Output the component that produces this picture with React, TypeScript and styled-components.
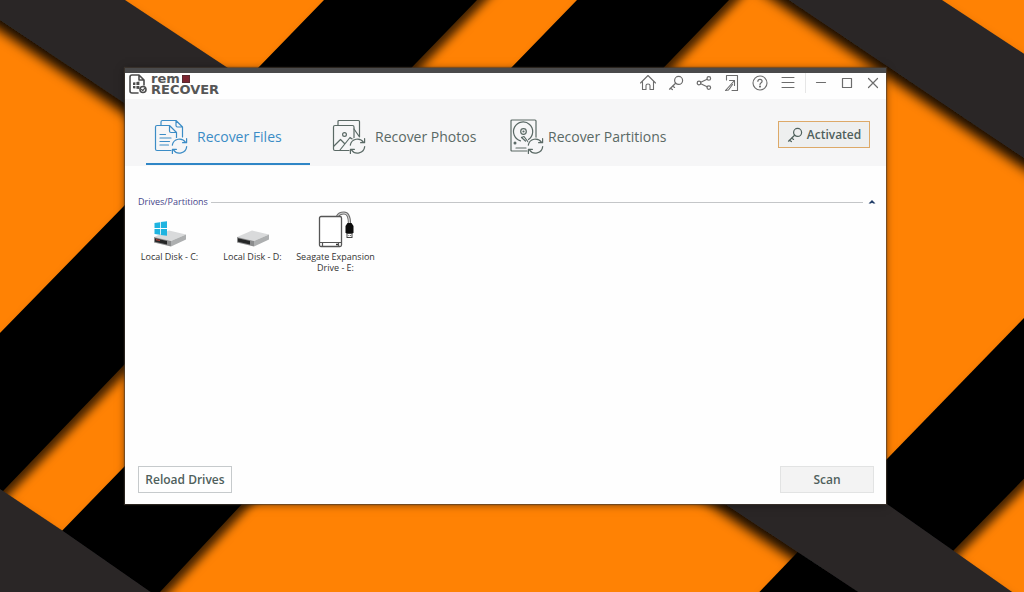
import React from "react";
import styled, { createGlobalStyle } from "styled-components";

const GlobalStyle = createGlobalStyle`
  *, *::before, *::after { box-sizing: border-box; }
  body {
    margin: 0;
    background: #ff8204;
    font-family: "Open Sans", "Noto Sans", sans-serif;
    color: #4f605c;
  }
  button { font: inherit; color: inherit; cursor: pointer; }
`;

const Desktop = styled.div`
  position: relative;
  display: flex;
  min-height: 100vh;
  padding: 68px 138px 88px 125px;
  overflow: hidden;
`;

const Wallpaper = styled.svg`
  position: absolute;
  inset: 0;
  width: 100%;
  height: 100%;
`;

const AppWindow = styled.main`
  position: relative;
  flex: 1;
  display: flex;
  flex-direction: column;
  min-width: 0;
  border-top: 5px solid #4a4a4b;
  background: #fefefe;
  box-shadow: 0 0 1px 1px rgba(70, 60, 50, 0.6), 0 1px 8px rgba(0, 0, 0, 0.5);
`;

const TitleBar = styled.header`
  display: flex;
  align-items: flex-start;
  justify-content: space-between;
  height: 26px;
`;

const Brand = styled.div`
  display: flex;
  gap: 4px;
  padding: 1px 0 0 4px;
`;

const BrandName = styled.div`
  display: grid;
  font-family: "DejaVu Sans", sans-serif;
  font-size: 13px;
  font-weight: 700;
  color: #565656;
`;

const BrandTop = styled.span`
  display: flex;
  align-items: center;
  gap: 2px;
  height: 10px;
  line-height: 6px;
`;

const BrandSquare = styled.i`
  width: 8px;
  height: 8px;
  background: #7c2430;
  border: 1px solid #5a2a30;
`;

const BrandBottom = styled.span`
  line-height: 12px;
`;

const Toolbar = styled.nav`
  display: flex;
  align-items: center;
  height: 20px;
`;

const ToolButton = styled.button<{ $width: number }>`
  display: grid;
  place-items: center;
  width: ${(p) => p.$width}px;
  height: 20px;
  padding: 0;
  border: 0;
  background: none;
  color: #6c6c6c;
`;

const Separator = styled.span`
  width: 1px;
  height: 20px;
  margin: 0 2px 0 3px;
  background: #e6e6e6;
`;

const TabBar = styled.div`
  display: flex;
  align-items: flex-start;
  gap: 14px;
  height: 67px;
  padding: 0 16px 0 21px;
  background: #f6f6f7;
`;

const Tab = styled.button<{ $active?: boolean; $gap?: number }>`
  display: flex;
  align-items: center;
  gap: ${(p) => p.$gap ?? 9}px;
  width: 164px;
  height: 66px;
  padding: 12px 0 0 8px;
  border: 0;
  border-bottom: 2px solid ${(p) => (p.$active ? "#2f86c6" : "transparent")};
  background: none;
  color: ${(p) => (p.$active ? "#3b8cc6" : "#5a6965")};
  font-size: 14px;
  line-height: 20px;
  white-space: nowrap;

  svg { flex: none; }
`;

const Activated = styled.button`
  display: flex;
  align-items: center;
  justify-content: center;
  gap: 4px;
  width: 92px;
  height: 27px;
  margin: 22px 0 0 auto;
  padding: 0;
  border: 1px solid #dda968;
  background: #eeefef;
  font-size: 12px;
  font-weight: 600;
`;

const Content = styled.section`
  flex: 1;
  padding: 30px 8px 0 3px;
`;

const GroupHeader = styled.div`
  display: flex;
  align-items: center;
  gap: 3px;
  padding-left: 10px;
`;

const GroupTitle = styled.h2`
  margin: 0;
  color: #45458a;
  font-size: 9px;
  font-weight: 400;
  line-height: 12px;
`;

const GroupLine = styled.span`
  flex: 1;
  height: 1px;
  background: #c4c6c8;
`;

const Collapse = styled.button`
  display: grid;
  place-items: center;
  width: 12px;
  height: 12px;
  padding: 0;
  border: 0;
  background: none;
`;

const DriveList = styled.ul`
  display: flex;
  margin: 3px 0 0;
  padding: 0;
  list-style: none;
`;

const Drive = styled.button`
  display: flex;
  flex-direction: column;
  align-items: center;
  gap: 2px;
  width: 83px;
  padding: 0;
  border: 0;
  background: none;
  color: #333;
  font-size: 9px;
  line-height: 11px;
`;

const Footer = styled.footer`
  display: flex;
  justify-content: space-between;
  padding: 0 12px 11px 13px;
`;

const FooterButton = styled.button<{ $filled?: boolean }>`
  width: 94px;
  height: 27px;
  padding: 0;
  border: 1px solid ${(p) => (p.$filled ? "#e2e3e3" : "#c6cacc")};
  background: ${(p) => (p.$filled ? "#f3f3f3" : "#fefefe")};
  font-size: 12px;
  font-weight: 600;
`;

const line = { fill: "none", stroke: "currentColor", strokeLinecap: "round", strokeLinejoin: "round" } as const;

function Stripes() {
  return (
    <Wallpaper viewBox="0 0 1024 592" preserveAspectRatio="none" aria-hidden="true">
      <defs>
        <filter id="blackShadow" filterUnits="userSpaceOnUse" x="-60" y="-60" width="1150" height="720">
          <feDropShadow dx="5" dy="5" stdDeviation="5" floodOpacity="0.75" />
        </filter>
        <filter id="greyShadow" filterUnits="userSpaceOnUse" x="-60" y="-120" width="1150" height="780">
          <feDropShadow dx="-4" dy="8" stdDeviation="6" floodOpacity="0.9" />
        </filter>
      </defs>
      <rect width="1024" height="592" fill="#ff8204" />
      <g fill="#000" filter="url(#blackShadow)">
        <path d="M363 -40L324 0L123 207L-40 374V536L5 489L123 366L477 0L516 -40Z" />
        <path d="M616 -40L577 0L123 468L-10 605V640H115L160 592L242 504L729 0L768 -40Z" />
        <path d="M1064 277L1024 318L887 459L721 632H873L953 551L1064 438Z" />
      </g>
      <g fill="#2a2728" filter="url(#greyShadow)">
        <path d="M-40 -107L125 0L887 504L1069 632H919L725 504L0 20L-40 -6Z" />
        <path d="M882 -40L942 0L1064 80V185L789 0L729 -40Z" />
        <path d="M-40 462L0 489L63 531L208 632H-40Z" />
      </g>
    </Wallpaper>
  );
}

function LogoMark() {
  return (
    <svg width="18" height="20" viewBox="0 0 18 20" {...line} strokeWidth="1.6" stroke="#4c4c4c" aria-hidden="true">
      <path d="M9 19H3Q1 19 1 17V3Q1 1 3 1H10L15 6V11M10 1V6H15" />
      <path d="M4 8.6L6.4 8.2V11H4ZM7.4 8L10.4 7.6V11H7.4ZM4 12H6.4V14.6L4 14.2ZM7.4 12H10.4V15L7.4 14.7Z" fill="#4c4c4c" stroke="none" />
      <circle cx="14" cy="15.5" r="3" />
      <path d="M12.6 15.5L13.8 16.6L15.6 14.4" strokeWidth="1.2" />
    </svg>
  );
}

function HomeIcon() {
  return (
    <svg width="18" height="18" viewBox="0 0 18 18" {...line} strokeWidth="1.1">
      <path d="M1.5 9L9 1.5L16.5 9M3.5 7.8V15.5H7V11.5Q7 10 9 10T11 11.5V15.5H14.5V7.8" />
    </svg>
  );
}

function KeyIcon() {
  return (
    <svg width="16" height="16" viewBox="0 0 16 16" {...line} strokeWidth="1.2">
      <circle cx="10.6" cy="5.4" r="4" />
      <path d="M7.6 8.2L1.5 14.2M2.4 13.2L4.4 14.6M4.6 11L6.6 12.4" />
    </svg>
  );
}

function ShareIcon() {
  return (
    <svg width="16" height="16" viewBox="0 0 16 16" {...line} strokeWidth="1.2">
      <circle cx="3" cy="8" r="1.8" />
      <circle cx="12.8" cy="3.4" r="1.8" />
      <circle cx="12.8" cy="12.6" r="1.8" />
      <path d="M4.8 7.2L11.1 4.2M4.8 8.8L11.1 11.8" />
    </svg>
  );
}

function ExportIcon() {
  return (
    <svg width="16" height="18" viewBox="0 0 16 18" {...line} strokeWidth="1.1">
      <path d="M2.5 6V1.5H13.5V16.5H8" />
      <path d="M5.5 6.5H10.5V11.5M10.5 6.5L1.5 16.5L4.5 16L8.5 10.5" />
    </svg>
  );
}

function HelpIcon() {
  return (
    <svg width="16" height="16" viewBox="0 0 16 16" {...line} strokeWidth="1.1">
      <circle cx="8" cy="8" r="7" />
      <path d="M5.9 6.3Q5.9 4.4 8 4.4T10.1 6.3Q10.1 7.3 8.9 8Q8 8.6 8 9.6" strokeWidth="1.2" />
      <circle cx="8" cy="11.6" r="0.5" fill="currentColor" />
    </svg>
  );
}

function MenuIcon() {
  return (
    <svg width="14" height="14" viewBox="0 0 14 14" {...line} strokeWidth="1">
      <path d="M1 1.5H13M1 6.5H13M1 11.5H13" />
    </svg>
  );
}

function WindowIcon({ kind }: { kind: "min" | "max" | "close" }) {
  const d = {
    min: "M1.5 5.5H10.5",
    max: "M1.5 1.5H10.5V10.5H1.5Z",
    close: "M1.5 1.5L10.5 10.5M10.5 1.5L1.5 10.5",
  }[kind];
  return (
    <svg width="12" height="12" viewBox="0 0 12 12" {...line} strokeWidth="1.2">
      <path d={d} />
    </svg>
  );
}

function RefreshMark() {
  return (
    <>
      <circle cx="25.5" cy="27" r="8.5" fill="#f6f6f7" stroke="none" />
      <path d="M18.3 26.2A7.3 7.3 0 0 1 31.6 23.4M32.6 19.6V23.7H28.6M32.7 27.6A7.3 7.3 0 0 1 19.4 30.8M18.4 34.4V30.4H22.4" />
    </>
  );
}

function FilesIcon() {
  return (
    <svg width="34" height="36" viewBox="0 0 34 36" {...line} strokeWidth="1.2">
      <path d="M17 31.5H3Q1.5 31.5 1.5 30V8Q1.5 6.5 3 6.5H15.5L22.5 13.5V19M15.5 6.5V12Q15.5 13.5 17 13.5H22.5" />
      <path d="M7 6V3Q7 1.5 8.5 1.5H22L28.5 8V18M22 1.5V6.5Q22 8 23.5 8H28.5" />
      <path d="M6 15.5H11.5M6 19H17M6 22.5H15.5M6 26H14.5" />
      <RefreshMark />
    </svg>
  );
}

function PhotosIcon() {
  return (
    <svg width="34" height="36" viewBox="0 0 34 36" {...line} strokeWidth="1.2">
      <path d="M17 31.5H3Q1.5 31.5 1.5 30V8Q1.5 6.5 3 6.5H20.5Q22 6.5 22 8V19" />
      <path d="M6 6V2.5Q6 1.5 7 1.5H26.5Q27.5 1.5 27.5 2.5V18L22 10" />
      <circle cx="12.5" cy="15.5" r="1.9" />
      <path d="M2 27L8.5 20.5L12.5 24.5M8 31L18 18.5L21.5 21" />
      <RefreshMark />
    </svg>
  );
}

function PartitionsIcon() {
  return (
    <svg width="34" height="36" viewBox="0 0 34 36" {...line} strokeWidth="1.2">
      <path d="M17 32H2Q1 32 1 31V2Q1 1 2 1H25Q26 1 26 2V19" />
      <path d="M10.5 21.8A9.6 9.6 0 1 1 18.5 20.5" />
      <circle cx="13.5" cy="12.5" r="2.8" />
      <circle cx="13.5" cy="12.5" r="0.5" />
      <path d="M11.5 18.5L14 17.5L18.5 23.5M11.5 18.5L15.5 22M6 29H16" />
      <circle cx="5" cy="24" r="0.9" fill="currentColor" />
      <RefreshMark />
    </svg>
  );
}

function DiskIcon({ system }: { system?: boolean }) {
  return (
    <svg width="36" height="38" viewBox="0 0 36 38" aria-hidden="true">
      <path d="M2 26L17 19.5L34 23.5L19 30Z" fill="#d9dadb" />
      <path d="M19 30L34 23.5V28.5L19 35.5Z" fill="#adafb0" />
      <path d="M2 26L19 30V35.5L2 31.5Z" fill="#8b8c8d" />
      <path d="M3 27.3L15 30V33.5L3 30.8Z" fill="#252627" />
      {system && (
        <>
          <path d="M4 28.6L8 29.5" stroke="#b34138" strokeWidth="1.2" />
          <path d="M2.5 12L8 11.2V17H2.5ZM8.8 11.1L15 10.2V17H8.8ZM2.5 18H8V23.8L2.5 23ZM8.8 18H15V24.8L8.8 23.9Z" fill="#1fb4e0" />
        </>
      )}
    </svg>
  );
}

function UsbDriveIcon() {
  return (
    <svg width="36" height="38" viewBox="0 0 36 38" fill="none" aria-hidden="true">
      <path d="M19.5 5.5Q21 2 26 2Q31.5 2 31.5 13" stroke="#6e6e6e" strokeWidth="3.2" />
      <path d="M19.5 5.5Q21 2 26 2Q31.5 2 31.5 13" stroke="#d5d5d5" strokeWidth="1.2" />
      <rect x="1.5" y="5.5" width="22" height="30" rx="1.5" fill="#fff" stroke="#555" strokeWidth="1.3" />
      <path d="M1.5 31.5H23.5M4.5 31.5V35M20.5 31.5V35" stroke="#555" strokeWidth="1.2" />
      <path d="M18 33.5H20" stroke="#333" strokeWidth="1.5" />
      <path d="M29.5 12H33.5L35.5 15V21.5L34.5 22.5H28.5L27.5 21.5V15Z" fill="#0b0b0b" />
      <rect x="29" y="22.5" width="5" height="4" fill="#fff" stroke="#444" />
      <path d="M30.5 24.5H31.2M32.2 24.5H32.9" stroke="#333" />
    </svg>
  );
}

const tools = [
  { label: "Home", icon: <HomeIcon /> },
  { label: "License key", icon: <KeyIcon /> },
  { label: "Share", icon: <ShareIcon /> },
  { label: "Export", icon: <ExportIcon /> },
  { label: "Help", icon: <HelpIcon /> },
  { label: "Menu", icon: <MenuIcon /> },
];

const drives = [
  { label: "Local Disk - C:", icon: <DiskIcon system /> },
  { label: "Local Disk - D:", icon: <DiskIcon /> },
  { label: "Seagate Expansion Drive - E:", icon: <UsbDriveIcon /> },
];

export default function App() {
  return (
    <>
      <GlobalStyle />
      <Desktop>
        <Stripes />
        <AppWindow>
          <TitleBar>
            <Brand>
              <LogoMark />
              <BrandName>
                <BrandTop>rem<BrandSquare /></BrandTop>
                <BrandBottom>RECOVER</BrandBottom>
              </BrandName>
            </Brand>
            <Toolbar>
              {tools.map((t) => (
                <ToolButton key={t.label} $width={28} aria-label={t.label}>{t.icon}</ToolButton>
              ))}
              <Separator />
              <ToolButton $width={26} aria-label="Minimize"><WindowIcon kind="min" /></ToolButton>
              <ToolButton $width={26} aria-label="Maximize"><WindowIcon kind="max" /></ToolButton>
              <ToolButton $width={26} aria-label="Close"><WindowIcon kind="close" /></ToolButton>
            </Toolbar>
          </TitleBar>
          <TabBar>
            <Tab $active><FilesIcon />Recover Files</Tab>
            <Tab><PhotosIcon />Recover Photos</Tab>
            <Tab $gap={4}><PartitionsIcon />Recover Partitions</Tab>
            <Activated><KeyIcon />Activated</Activated>
          </TabBar>
          <Content>
            <GroupHeader>
              <GroupTitle>Drives/Partitions</GroupTitle>
              <GroupLine />
              <Collapse aria-label="Collapse group">
                <svg width="8" height="6" viewBox="0 0 8 6" fill="#1e3a66"><path d="M4 1L7.5 4.5H5.3L4 3.7L2.7 4.5H0.5Z" /></svg>
              </Collapse>
            </GroupHeader>
            <DriveList>
              {drives.map((d) => (
                <li key={d.label}><Drive>{d.icon}<span>{d.label}</span></Drive></li>
              ))}
            </DriveList>
          </Content>
          <Footer>
            <FooterButton>Reload Drives</FooterButton>
            <FooterButton $filled>Scan</FooterButton>
          </Footer>
        </AppWindow>
      </Desktop>
    </>
  );
}
